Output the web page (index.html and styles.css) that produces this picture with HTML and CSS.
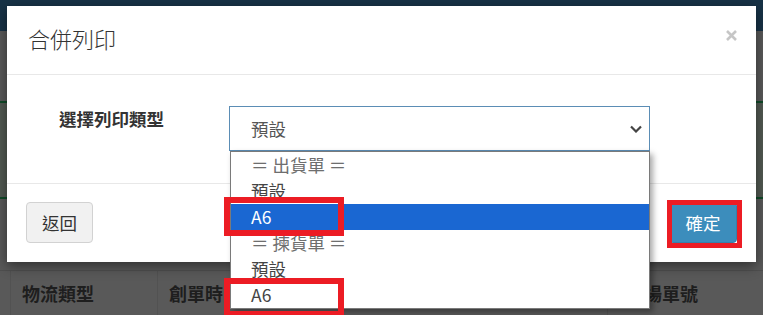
FILE: index.html
```html
<!DOCTYPE html>
<html lang="zh-Hant">
<head>
    <meta charset="UTF-8">
    <meta name="viewport" content="width=device-width, initial-scale=1.0">
    <title>合併列印</title>
    <link rel="stylesheet" href="styles.css">
</head>
<body>
    <header class="topbar"></header>
    <section class="panel"></section>

    <div class="orders">
        <div class="cell">物流類型</div>
        <div class="cell">創單時間</div>
        <div class="cell cell-last">賣場單號</div>
    </div>

    <div class="modal">
        <div class="modal-header">
            <h4 class="modal-title">合併列印</h4>
            <button class="close">
                <svg width="11" height="11" viewBox="0 0 11 11"><path d="M1 1 L10 10 M10 1 L1 10" /></svg>
            </button>
        </div>

        <div class="modal-body">
            <label class="form-label">選擇列印類型</label>
            <div class="select-wrap">
                <div class="select">
                    <span>預設</span>
                    <svg class="chevron" width="12" height="8" viewBox="0 0 12 8"><path d="M1 1.5 L6 6.5 L11 1.5" /></svg>
                </div>
                <ul class="dropdown">
                    <li class="group">＝ 出貨單 ＝</li>
                    <li>預設</li>
                    <li class="active">A6</li>
                    <li class="group">＝ 揀貨單 ＝</li>
                    <li>預設</li>
                    <li>A6</li>
                </ul>
            </div>
        </div>

        <div class="modal-footer">
            <button class="btn">返回</button>
            <button class="btn btn-primary">確定</button>
        </div>
    </div>

    <!-- 標示框 -->
    <div class="mark mark-first"></div>
    <div class="mark mark-second"></div>
    <div class="mark mark-ok"></div>
</body>
</html>
```

FILE: styles.css
```css
body {
    margin: 0;
    width: 763px;
    height: 315px;
    overflow: hidden;
    position: relative;
    background: #595959;
    font-family: "Noto Sans CJK TC", "Noto Sans", sans-serif;
}
.topbar {
    height: 31px;
    background: #173246;
}
.panel {
    margin-top: 70px;
    height: 94px;
    background: #525952;
    border-top: 2px solid #0f4a28;
    border-bottom: 2px solid #0f4a28;
}
.orders {
    margin-top: 71px;
    display: grid;
    grid-template-columns: 10px 147px 450px 1fr;
    border-top: 1px solid #4f4f4f;
    height: 48px;
}
.orders::before {
    content: "";
}
.cell {
    border-left: 1px solid #525252;
    padding: 9px 12px 0 11px;
    font-size: 18px;
    font-weight: bold;
    color: #1e1e1e;
    white-space: nowrap;
    overflow: hidden;
}
.cell-last {
    padding-left: 18px;
}

/* 對話框 */
.modal {
    position: absolute;
    left: 7px;
    top: 6px;
    width: 749px;
    background: #fff;
    box-shadow: 0 4px 12px rgba(0, 0, 0, 0.45);
}
.modal-header {
    height: 68px;
    padding: 0 19px 0 21px;
    display: flex;
    justify-content: space-between;
    align-items: flex-start;
    border-bottom: 1px solid #e8e8e8;
}
.modal-title {
    margin: 21px 0 0;
    font-size: 22px;
    line-height: 22px;
    font-weight: 300;
    color: #333;
}
.close {
    margin-top: 24px;
    padding: 0;
    border: none;
    background: none;
    line-height: 0;
}
.close path {
    stroke: #c6c6c6;
    stroke-width: 2.6;
    fill: none;
}
.modal-body {
    height: 77px;
    padding: 31px 0 0 52px;
    display: flex;
    align-items: flex-start;
}
.form-label {
    width: 170px;
    font-size: 17.5px;
    line-height: 25px;
    font-weight: bold;
    color: #333;
}
.select-wrap {
    position: relative;
}
.select {
    box-sizing: border-box;
    width: 421px;
    height: 45px;
    border: 1px solid #5b8db5;
    padding: 0 7px 0 21px;
    display: flex;
    justify-content: space-between;
    align-items: center;
    font-size: 17.5px;
    color: #555;
}
.chevron path {
    stroke: #444;
    stroke-width: 2.2;
    fill: none;
}
.dropdown {
    position: absolute;
    left: 1px;
    top: 45px;
    box-sizing: border-box;
    width: 420px;
    margin: 0;
    padding: 0;
    list-style: none;
    background: #fff;
    border: 1px solid #7a7a7a;
    box-shadow: 3px 3px 6px rgba(0, 0, 0, 0.35);
    z-index: 2;
}
.dropdown li {
    height: 26px;
    line-height: 26px;
    padding-left: 20px;
    font-size: 17.5px;
    color: #444;
}
.dropdown .group {
    color: #6e6e6e;
}
.dropdown .active {
    background: #1a67d2;
    color: #fff;
}
.modal-footer {
    border-top: 1px solid #e8e8e8;
    padding: 18px 19px 19px;
    display: flex;
    justify-content: space-between;
}
.btn {
    height: 41px;
    padding: 0 15px;
    font-family: inherit;
    font-size: 17.5px;
    color: #333;
    background: #f1f1f1;
    border: 1px solid #d2d2d2;
    border-radius: 4px;
}
.btn-primary {
    width: 68px;
    padding: 0;
    color: #fff;
    background: #3c8dbc;
    border-color: #367fa9;
}

/* 紅色標示框 */
.mark {
    position: absolute;
    box-sizing: border-box;
    border: 6px solid #ec1c24;
    z-index: 3;
}
.mark-first {
    left: 224px;
    top: 197px;
    width: 120px;
    height: 39px;
}
.mark-second {
    left: 224px;
    top: 278px;
    width: 120px;
    height: 39px;
}
.mark-ok {
    left: 667px;
    top: 200px;
    width: 75px;
    height: 48px;
    border-width: 5px;
}
```
